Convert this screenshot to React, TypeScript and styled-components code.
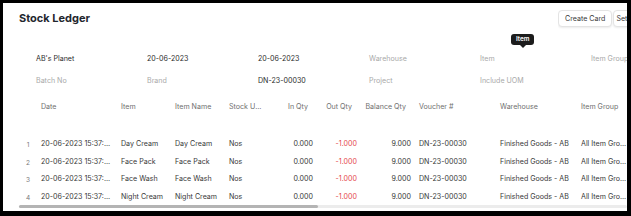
import React from 'react';
import styled, { createGlobalStyle } from 'styled-components';

const GlobalStyle = createGlobalStyle`
    html, body {
        margin: 0;
        padding: 0;
        background: #000;
    }
    body {
        padding: 3px 0 0 3px;
        font-family: Inter, "Noto Sans", sans-serif;
    }
`;

const Page = styled.div`
    width: 624px;
    height: 208px;
    background: #fff;
    overflow: hidden;
    color: #383838;
    font-size: 7.1px;
`;

const Header = styled.div`
    height: 30px;
    display: flex;
    align-items: center;
    padding-left: 16px;
`;

const Title = styled.h1`
    flex: 1;
    margin: 0;
    font-size: 11px;
    font-weight: 700;
    color: #1f272e;
`;

const Actions = styled.div`
    display: flex;
    gap: 1px;
    width: 69px;
    flex-shrink: 0;
    padding: 3px 0;
    overflow: hidden;
`;

const Button = styled.button<{ $tight?: boolean }>`
    flex-shrink: 0;
    height: 17px;
    padding: 0 ${p => (p.$tight ? '2px' : '6px')};
    border: 1px solid #e4e4e4;
    border-radius: 4px;
    background: #fff;
    box-shadow: 0 1px 2px rgba(0, 0, 0, 0.08);
    font-family: inherit;
    font-size: 7.1px;
    color: #383838;
    white-space: nowrap;
`;

const Filters = styled.div`
    margin-top: 16px;
    padding-left: 33px;
    display: grid;
    grid-template-columns: repeat(6, 111px);
    row-gap: 4px;
`;

const Filter = styled.div<{ $filled?: boolean }>`
    position: relative;
    height: 18px;
    display: flex;
    align-items: center;
    white-space: nowrap;
    color: ${p => (p.$filled ? '#2b2b2b' : '#a9a9a9')};
`;

const Tooltip = styled.div`
    position: absolute;
    left: 31px;
    top: -15px;
    padding: 0 5px;
    height: 11px;
    line-height: 11px;
    border-radius: 3px;
    background: #1c1c1c;
    color: #fff;
    font-size: 6.3px;
    font-weight: 600;

    &::after {
        content: '';
        position: absolute;
        left: 50%;
        bottom: -3px;
        margin-left: -3px;
        border-left: 3px solid transparent;
        border-right: 3px solid transparent;
        border-top: 3px solid #1c1c1c;
    }
`;

const Table = styled.div`
    margin-top: 8px;
    margin-left: 16px;
`;

const columns = '18px 80px 54px 54px 41px 51px 44px 54px 81px 81px 54px 80px';

const HeadRow = styled.div`
    display: grid;
    grid-template-columns: ${columns};
    height: 18px;
    align-items: center;
    color: #6f6f6f;
`;

const FilterRow = styled.div`
    height: 20px;
`;

const Row = styled.div`
    display: grid;
    grid-template-columns: ${columns};
    height: 17.6px;
    align-items: center;
`;

const Cell = styled.div<{ $right?: boolean; $head?: boolean; $tone?: 'red' }>`
    padding: ${p => (p.$head && p.$right ? '0 9px 0 0' : '0 4px')};
    text-align: ${p => (p.$right ? 'right' : 'left')};
    white-space: nowrap;
    overflow: hidden;
    text-overflow: ellipsis;
    color: ${p => (p.$tone === 'red' ? '#e5484d' : 'inherit')};
`;

const RowNum = styled.div`
    text-align: center;
    padding-top: 3px;
    font-size: 6.5px;
    color: #7a7a7a;
`;

const Scrollbar = styled.div`
    height: 3px;
    background: #ececec;
    border-radius: 2px;
`;

const Thumb = styled.div`
    width: 299px;
    height: 100%;
    border-radius: 2px;
    background: #b4b4b4;
`;

const heads: { label: string; right?: boolean }[] = [
    { label: 'Date' },
    { label: 'Item' },
    { label: 'Item Name' },
    { label: 'Stock UOM' },
    { label: 'In Qty', right: true },
    { label: 'Out Qty', right: true },
    { label: 'Balance Qty', right: true },
    { label: 'Voucher #' },
    { label: 'Warehouse' },
    { label: 'Item Group' },
    { label: 'Brand' },
];

const items = ['Day Cream', 'Face Pack', 'Face Wash', 'Night Cream'];

const App: React.FC = () => {
    return (
        <Page>
            <GlobalStyle />
            <Header>
                <Title>Stock Ledger</Title>
                <Actions>
                    <Button>Create Card</Button>
                    <Button $tight>Set User Settings</Button>
                </Actions>
            </Header>
            <Filters>
                <Filter $filled>AB's Planet</Filter>
                <Filter $filled>20-06-2023</Filter>
                <Filter $filled>20-06-2023</Filter>
                <Filter>Warehouse</Filter>
                <Filter>
                    Item
                    <Tooltip>Item</Tooltip>
                </Filter>
                <Filter>Item Group</Filter>
                <Filter>Batch No</Filter>
                <Filter>Brand</Filter>
                <Filter $filled>DN-23-00030</Filter>
                <Filter>Project</Filter>
                <Filter>Include UOM</Filter>
            </Filters>
            <Table>
                <HeadRow>
                    <div />
                    {heads.map(h => (
                        <Cell key={h.label} $head $right={h.right}>{h.label}</Cell>
                    ))}
                </HeadRow>
                <FilterRow />
                {items.map((item, i) => (
                    <Row key={item}>
                        <RowNum>{i + 1}</RowNum>
                        <Cell>20-06-2023 15:37:41.253</Cell>
                        <Cell>{item}</Cell>
                        <Cell>{item}</Cell>
                        <Cell>Nos</Cell>
                        <Cell $right>0.000</Cell>
                        <Cell $right $tone="red">-1.000</Cell>
                        <Cell $right>9.000</Cell>
                        <Cell>DN-23-00030</Cell>
                        <Cell>Finished Goods - AB</Cell>
                        <Cell>All Item Groups</Cell>
                        <Cell></Cell>
                    </Row>
                ))}
                <Scrollbar>
                    <Thumb />
                </Scrollbar>
            </Table>
        </Page>
    );
};

export default App;
